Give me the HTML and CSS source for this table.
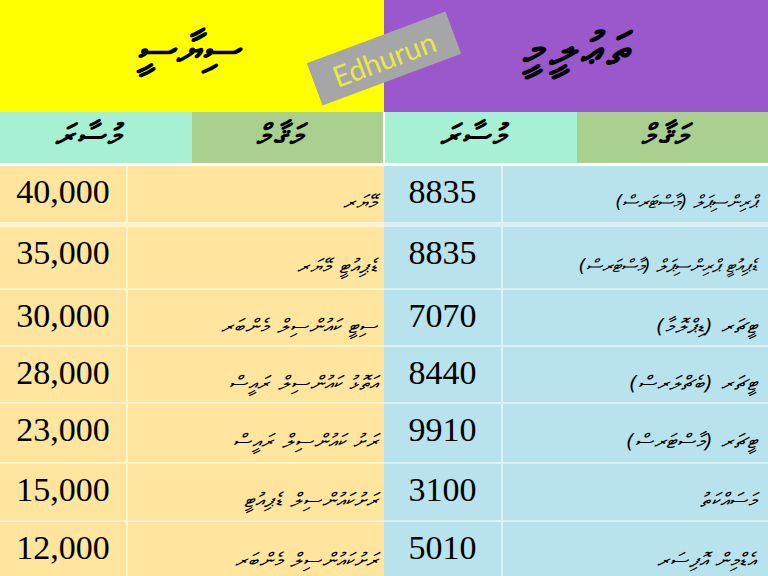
FILE: index.html
```html
<!DOCTYPE html>
<html lang="dv">
<head>
<meta charset="utf-8">
<title>Edhurun</title>
<link rel="stylesheet" href="styles.css">
</head>
<body>
<div class="page">
  <div class="top">
    <div class="title title-pol"><span dir="rtl">ސިޔާސީ</span></div>
    <div class="title title-edu"><span dir="rtl">ތަޢުލީމީ</span></div>
    <div class="badge"><span>Edhurun</span></div>
  </div>
  <div class="halves">
    <section class="half half-pol">
      <div class="head">
        <div class="hcell hcell-sal" dir="rtl">މުސާރަ</div>
        <div class="hcell hcell-job" dir="rtl">މަޤާމް</div>
      </div>
      <div class="body">
        <div class="row r1"><div class="num">40,000</div><div class="job" dir="rtl">މޭޔަރ</div></div>
        <div class="row r2"><div class="num">35,000</div><div class="job" dir="rtl">ޑެޕިއުޓީ މޭޔަރ</div></div>
        <div class="row r3"><div class="num">30,000</div><div class="job" dir="rtl">ސިޓީ ކައުންސިލް މެންބަރ</div></div>
        <div class="row r4"><div class="num">28,000</div><div class="job" dir="rtl">އަތޮޅު ކައުންސިލް ރައީސް</div></div>
        <div class="row r5"><div class="num">23,000</div><div class="job" dir="rtl">ރަށު ކައުންސިލް ރައީސް</div></div>
        <div class="row r6"><div class="num">15,000</div><div class="job" dir="rtl">ރަށުކައުންސިލް ޑެޕިއުޓީ</div></div>
        <div class="row r7"><div class="num">12,000</div><div class="job" dir="rtl">ރަށުކައުންސިލް މެންބަރ</div></div>
      </div>
    </section>
    <section class="half half-edu">
      <div class="head">
        <div class="hcell hcell-sal" dir="rtl">މުސާރަ</div>
        <div class="hcell hcell-job" dir="rtl">މަޤާމް</div>
      </div>
      <div class="body">
        <div class="row r1"><div class="num">8835</div><div class="job job-tight" dir="rtl">ޕްރިންސިޕަލް (މާސްޓަރސް)</div></div>
        <div class="row r2"><div class="num">8835</div><div class="job job-tight" dir="rtl">ޑެޕިއުޓީ ޕްރިންސިޕަލް (މާސްޓަރސް)</div></div>
        <div class="row r3"><div class="num">7070</div><div class="job" dir="rtl">ޓީޗަރ (ޑިޕްލޮމާ)</div></div>
        <div class="row r4"><div class="num">8440</div><div class="job" dir="rtl">ޓީޗަރ (ބެޗްލަރސް)</div></div>
        <div class="row r5"><div class="num">9910</div><div class="job" dir="rtl">ޓީޗަރ (މާސްޓަރސް)</div></div>
        <div class="row r6"><div class="num">3100</div><div class="job" dir="rtl">މަސައްކަތު</div></div>
        <div class="row r7"><div class="num">5010</div><div class="job" dir="rtl">އެޑްމިން އޮފިސަރ</div></div>
      </div>
    </section>
  </div>
</div>
</body>
</html>
```
FILE: styles.css
```css
html, body {
  margin: 0;
  padding: 0;
  background: #ffffff;
}
.page {
  width: 768px;
  height: 576px;
  overflow: hidden;
  position: relative;
  font-family: "DejaVu Sans", sans-serif;
  color: #000;
}
.top {
  height: 112px;
  display: grid;
  grid-template-columns: 384px 384px;
  position: relative;
}
.title {
  display: flex;
  align-items: center;
  justify-content: center;
  font-size: 42px;
  font-weight: bold;
  font-style: oblique;
  padding-bottom: 14px;
}
.title-pol { background: #ffff00; padding-right: 6px; letter-spacing: 2px; }
.title-edu { background: #9b58cc; padding-left: 4px; font-size: 46px; letter-spacing: 6px; }
.badge {
  position: absolute;
  left: 310px;
  top: 36px;
  width: 148px;
  height: 45px;
  background: #a6a6a6;
  transform: rotate(-20.5deg);
  display: flex;
  align-items: center;
  justify-content: center;
  font-family: "Lato", "Open Sans", sans-serif;
  font-size: 29px;
  color: #e8e84c;
}
.halves {
  display: grid;
  grid-template-columns: 384px 384px;
}
.head {
  display: grid;
  grid-template-columns: 1fr 1fr;
  height: 51px;
  border-right: 1px solid #fff;
  margin-bottom: 3px;
}
.half-edu .head { border-right: none; border-left: 1px solid #fff; }
.hcell {
  display: flex;
  align-items: center;
  justify-content: center;
  font-size: 31px;
  font-weight: bold;
  font-style: oblique;
  letter-spacing: 3px;
  padding: 0 14px 4px 0;
}
.hcell-sal { background: #a7f0d3; }
.hcell-job { background: #a9d08e; }
.body {
  display: flex;
  flex-direction: column;
  row-gap: 2px;
}
.half-pol .body { background: #fff3d0; }
.half-edu .body { background: #dcf1f6; }
.row {
  display: grid;
  column-gap: 2px;
}
.half-pol .row { grid-template-columns: 126px 1fr; }
.half-edu .row { grid-template-columns: 117px 1fr; }
.r1 { height: 56px; margin-bottom: 3px; }
.r2 { height: 61px; }
.r3 { height: 55px; }
.r4 { height: 55px; }
.r5 { height: 58px; }
.r6 { height: 56px; }
.r7 { height: 60px; }
.half-pol .num, .half-pol .job { background: #ffe59d; }
.half-edu .num, .half-edu .job { background: #b8e2ec; }
.num {
  font-family: "Liberation Serif", "Times New Roman", serif;
  font-size: 34px;
  line-height: 1;
  padding-top: 9px;
  text-align: center;
}
.job {
  display: flex;
  align-items: center;
  justify-content: flex-start;
  font-size: 20px;
  font-style: oblique;
  letter-spacing: 1px;
  padding: 16px 11px 0 8px;
}
.half-pol .job { padding-right: 6px; }
.job-tight { font-size: 18px; letter-spacing: 0; }
```
